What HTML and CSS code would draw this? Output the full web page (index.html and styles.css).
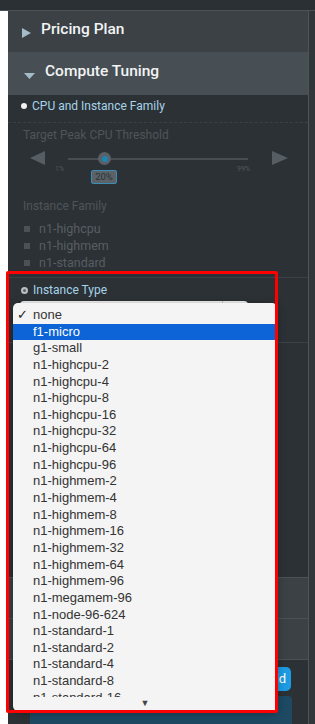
FILE: index.html
```html
<!DOCTYPE html>
<html>
<head>
<meta charset="utf-8">
<link rel="stylesheet" href="styles.css">
</head>
<body>
<div class="topbar"></div>
<div class="page">
  <div class="gutter"></div>
  <div class="panel">
    <div class="sec-head pricing">
      <svg class="tri-right" width="9" height="10" viewBox="0 0 9 10"><polygon points="0,0 9,5 0,10" fill="#a3bcc6"/></svg>
      <span class="title">Pricing Plan</span>
    </div>
    <div class="sec-head compute">
      <svg class="tri-down" width="11" height="6" viewBox="0 0 11 6"><polygon points="0,0 11,0 5.5,6" fill="#a3bcc6"/></svg>
      <span class="title">Compute Tuning</span>
    </div>
    <div class="content">
      <div class="sub-head dashed"><span class="dot"></span>CPU and Instance Family</div>
      <div class="label">Target Peak CPU Threshold</div>
      <div class="slider">
        <svg class="arrow" width="15" height="14" viewBox="0 0 15 14"><polygon points="15,0 15,14 0,7" fill="#575e63"/></svg>
        <div class="scale">
          <div class="track"><div class="thumb"><div class="thumb-dot"></div></div><div class="value">20%</div></div>
          <div class="ticks"><span>1%</span><span>99%</span></div>
        </div>
        <svg class="arrow" width="16" height="14" viewBox="0 0 16 14"><polygon points="0,0 0,14 16,7" fill="#575e63"/></svg>
      </div>
      <div class="label family">Instance Family</div>
      <div class="checks">
        <div class="check"><span class="box"></span>n1-highcpu</div>
        <div class="check"><span class="box"></span>n1-highmem</div>
        <div class="check"><span class="box"></span>n1-standard</div>
      </div>
      <div class="itype">
        <div class="sub-head"><span class="ring"></span>Instance Type</div>
        <div class="select"><span class="sel-btn"></span></div>
      </div>
      <div class="filler"></div>
      <div class="sec-head lower"></div>
      <div class="sec-head lower"></div>
      <div class="btn-row"><span class="btn">Add</span></div>
      <div class="bar"></div>
    </div>

    <div class="popup">
      <ul class="options">
        <li><span class="tick">✓</span>none</li>
        <li class="active">f1-micro</li>
        <li>g1-small</li>
        <li>n1-highcpu-2</li>
        <li>n1-highcpu-4</li>
        <li>n1-highcpu-8</li>
        <li>n1-highcpu-16</li>
        <li>n1-highcpu-32</li>
        <li>n1-highcpu-64</li>
        <li>n1-highcpu-96</li>
        <li>n1-highmem-2</li>
        <li>n1-highmem-4</li>
        <li>n1-highmem-8</li>
        <li>n1-highmem-16</li>
        <li>n1-highmem-32</li>
        <li>n1-highmem-64</li>
        <li>n1-highmem-96</li>
        <li>n1-megamem-96</li>
        <li>n1-node-96-624</li>
        <li>n1-standard-1</li>
        <li>n1-standard-2</li>
        <li>n1-standard-4</li>
        <li>n1-standard-8</li>
        <li class="partial">n1-standard-16</li>
      </ul>
      <div class="scroll-down">▼</div>
    </div>
    <div class="highlight-box"></div>
  </div>
  <div class="edge"></div>
</div>
</body>
</html>
```

FILE: styles.css
```css
* { box-sizing: border-box; }
html, body { margin: 0; padding: 0; }
body {
  background: #ffffff;
  font-family: Roboto, "Liberation Sans", sans-serif;
  width: 315px;
  height: 724px;
  overflow: hidden;
}
.topbar {
  height: 11px;
  background: #2b3034;
  border-bottom: 1px solid #4a5257;
}
.page {
  display: flex;
  height: 713px;
}
.gutter { width: 8px; background: #ffffff; }
.panel {
  position: relative;
  width: 301px;
  background: #2c3135;
  border-right: 1px solid #4c5459;
}
.edge { flex: 1; background: #30363a; }

.sec-head {
  display: flex;
  align-items: center;
  color: #f2f4f5;
  font-size: 15.5px;
  font-weight: 500;
}
.title { margin-bottom: 6px; }
.pricing {
  height: 41px;
  background: #3b4145;
  padding-left: 14px;
}
.pricing .tri-right { margin-right: 10px; margin-top: 2px; }
.compute {
  height: 43px;
  background: #474f54;
  padding-left: 16px;
}
.compute .tri-down { margin-right: 10px; margin-top: 5px; }

.content { background: #2c3135; }

.sub-head {
  display: flex;
  align-items: center;
  height: 22px;
  padding-left: 13px;
  color: #a6d4ea;
  font-size: 12px;
}
.dashed {
  height: 28px;
  padding-bottom: 6px;
  border-bottom: 1px dashed #3a4145;
}
.dot {
  width: 6px; height: 6px;
  border-radius: 50%;
  background: #f2f2f2;
  margin-right: 5px;
}
.ring {
  width: 7px; height: 7px;
  border-radius: 50%;
  border: 2px solid #b9bfc2;
  background: #5c6367;
  margin-right: 5px;
}
.label {
  color: #4e555a;
  font-size: 12px;
  line-height: 16px;
  padding-left: 15px;
  margin-top: 4px;
}
.slider {
  display: flex;
  align-items: flex-start;
  height: 48px;
  padding-left: 22px;
  padding-top: 8px;
}
.scale {
  width: 195px;
  margin-left: 10px;
  margin-right: 22px;
  padding-top: 7px;
}
.track {
  position: relative;
  height: 2px;
  margin-left: 13px;
  margin-right: 2px;
  background: #474e53;
}
.thumb {
  position: absolute;
  left: 30px;
  top: -6px;
  width: 13px; height: 13px;
  border-radius: 50%;
  background: #5a6166;
  display: flex;
  align-items: center;
  justify-content: center;
}
.thumb-dot {
  width: 6px; height: 6px;
  border-radius: 50%;
  background: #1c86b3;
}
.value {
  position: absolute;
  left: 23px;
  top: 12px;
  width: 26px;
  height: 14px;
  background: #5c6368;
  border: 1px solid #3c8db5;
  border-radius: 2px;
  color: #2b3236;
  font-size: 9.5px;
  line-height: 12px;
  text-align: center;
}
.ticks {
  display: flex;
  justify-content: space-between;
  margin-top: 5px;
  font-size: 7px;
  color: #52595e;
  line-height: 8px;
}
.family { margin-top: 7px; }
.checks {
  padding-top: 6px;
  padding-bottom: 6px;
  border-bottom: 1px solid #3b4246;
}
.check {
  display: flex;
  align-items: center;
  height: 17px;
  padding-left: 16px;
  color: #575e63;
  font-size: 12.5px;
}
.box {
  width: 6px; height: 6px;
  background: #4b5256;
  margin-right: 9px;
}
.itype {
  padding-top: 1px;
  padding-bottom: 17px;
  border-bottom: 1px solid #3b4246;
}
.select {
  margin: 0 0 0 12px;
  width: 228px;
  height: 24px;
  background: #efefef;
  border-radius: 4px;
  display: flex;
  justify-content: flex-end;
}
.sel-btn {
  width: 26px;
  border-left: 1px solid #c8c8c8;
}
.filler { height: 234px; }
.lower {
  height: 41px;
  background: #3b4145;
  border-top: 1px solid #4a5257;
}
.btn-row {
  display: flex;
  justify-content: flex-end;
  height: 37px;
  padding-top: 7px;
  padding-right: 17px;
  border-top: 1px solid #4a5257;
}
.btn {
  width: 50px;
  height: 24px;
  background: #1d9be3;
  border-radius: 3px 5px 5px 3px;
  color: #ffffff;
  font-size: 13px;
  line-height: 24px;
  text-align: right;
  padding-right: 5px;
}
.bar {
  margin-left: 22px;
  width: 262px;
  height: 40px;
  background: #1d4963;
  border-radius: 4px;
}

/* dropdown popup overlay */
.popup {
  position: absolute;
  left: 5px;
  top: 292px;
  width: 264px;
  height: 408px;
  background: #f4f4f4;
  border-radius: 5px;
  box-shadow: 0 2px 8px rgba(0,0,0,0.35);
  padding-top: 4px;
  font-family: "Liberation Sans", Arial, sans-serif;
  font-size: 13px;
  color: #333333;
}
.options {
  list-style: none;
  margin: 0;
  padding: 0;
  height: 390px;
  overflow: hidden;
}
.options li {
  position: relative;
  height: 16.65px;
  line-height: 16.65px;
  padding-left: 20px;
}
.options li.active {
  background: #0c64d6;
  color: #ffffff;
}
.tick {
  position: absolute;
  left: 4px;
  top: 0;
  font-size: 13px;
  color: #222;
}
.scroll-down {
  text-align: center;
  font-size: 9px;
  line-height: 12px;
  color: #444;
}

/* annotation frame */
.highlight-box {
  position: absolute;
  left: -2px;
  top: 260px;
  width: 272px;
  height: 442px;
  border: 3px solid #ff0000;
  border-radius: 2px;
  pointer-events: none;
}
```
